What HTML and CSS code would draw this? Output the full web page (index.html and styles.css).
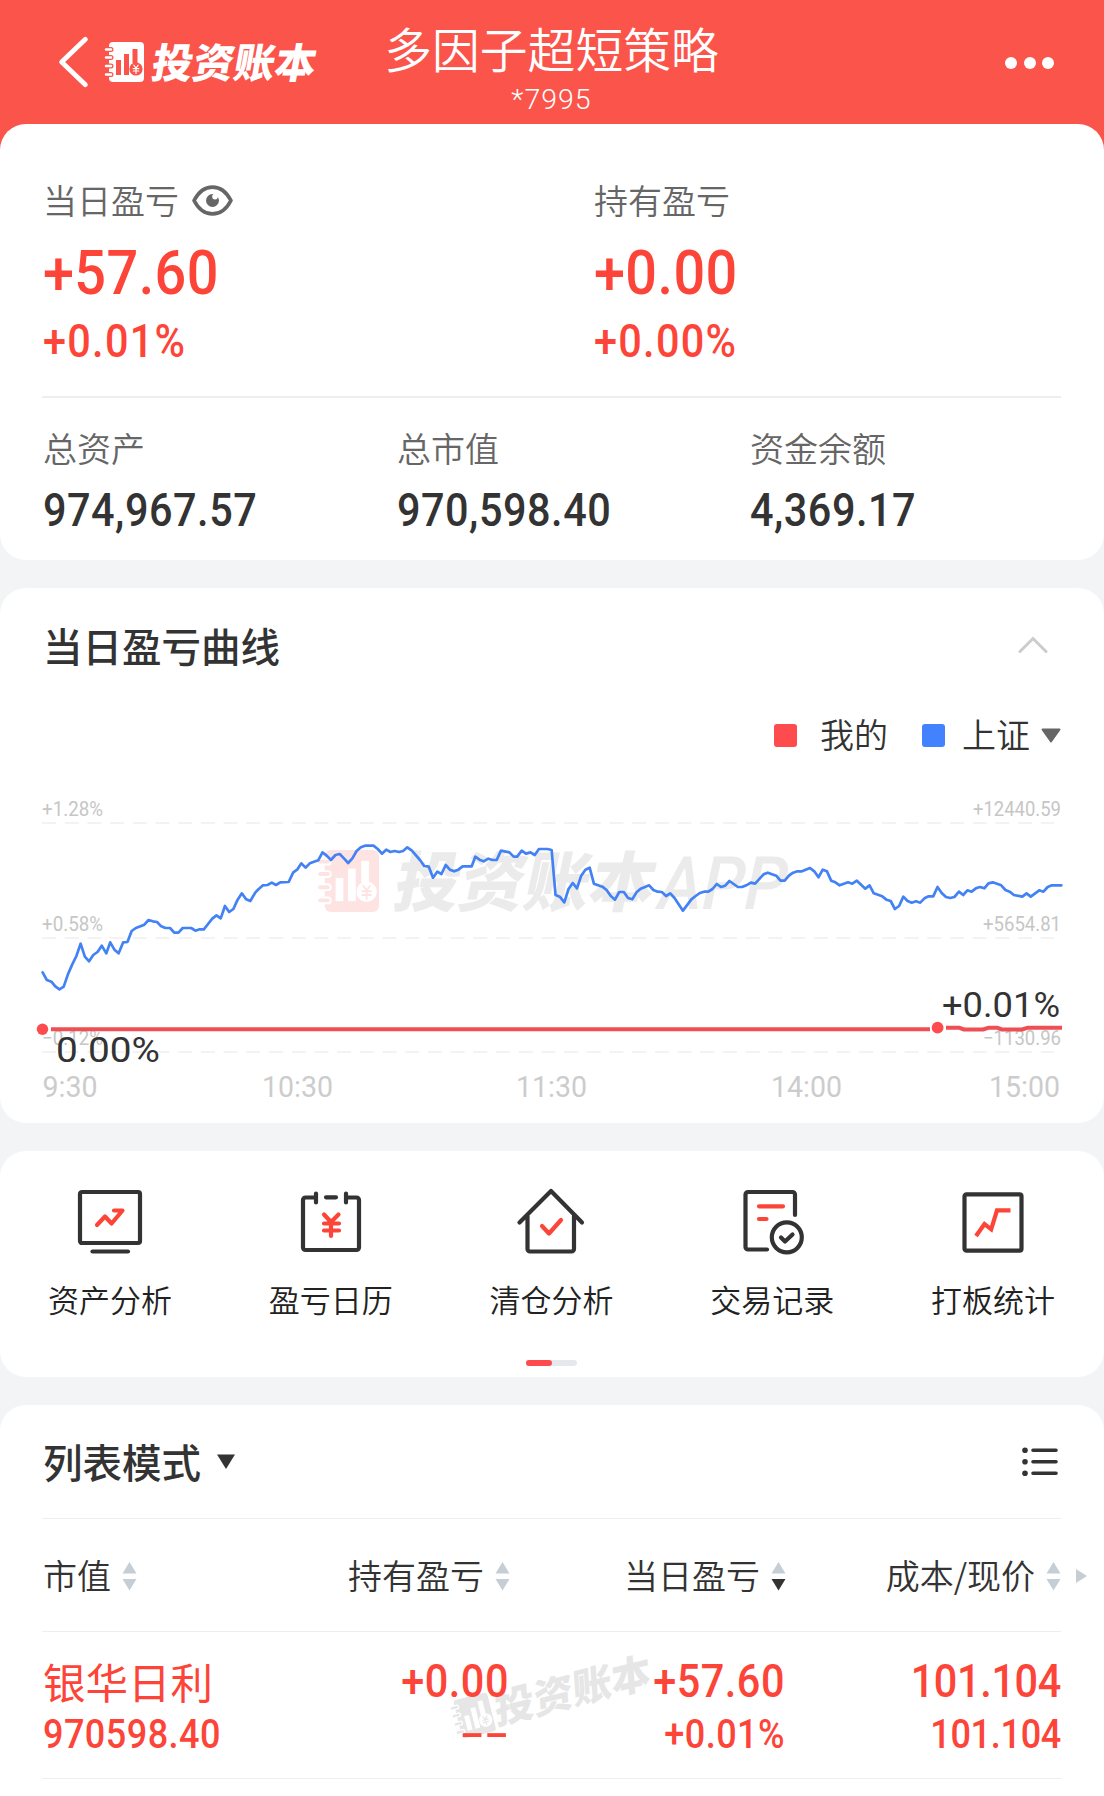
FILE: index.html
```html
<!DOCTYPE html>
<html lang="zh-CN">
<head>
    <meta charset="UTF-8">
    <meta name="viewport" content="width=device-width, initial-scale=1.0">
    <title>投资账本 - 多因子超短策略</title>
    <link rel="stylesheet" href="styles.css">
</head>
<body>
    <!-- shared shapes -->
    <svg class="sprite" width="0" height="0">
        <symbol id="logo" viewBox="0 0 40 40">
            <rect class="logo-body" x="5" y="0" width="35" height="40" rx="4"/>
            <g class="logo-hole">
                <rect x="12" y="18" width="5" height="15"/>
                <rect x="20" y="12" width="5" height="21"/>
                <rect x="28.5" y="7" width="5" height="14"/>
                <circle cx="32" cy="27" r="6.6"/>
            </g>
            <path class="logo-ring" d="M2 7.5h5M2 15.5h5M2 24h5M2 32.5h5"/>
            <path class="logo-pin" d="M2 7.5h5M2 15.5h5M2 24h5M2 32.5h5"/>
            <path class="logo-yen" d="M29.8 23.2l2.2 2.8 2.2-2.8M32 26v5.4M29.2 26.6h5.6M29.2 29h5.6"/>
        </symbol>
        <symbol id="sort" viewBox="0 0 15 30">
            <path class="sort-up" d="M7.5 1L14.5 12.500H.5z"/>
            <path class="sort-down" d="M7.5 29.500L14.5 18H.5z"/>
        </symbol>
    </svg>

    <header class="header">
        <div class="brand">
            <svg class="back" viewBox="0 0 30 50"><path d="M26 4L4 25l22 21"/></svg>
            <svg class="logo"><use href="#logo"/></svg>
            <span class="brand-name">投资账本</span>
        </div>
        <div class="title">
            <h1>多因子超短策略</h1>
            <p>*7995</p>
        </div>
        <div class="more"><i></i><i></i><i></i></div>
    </header>

    <section class="card summary">
        <div class="profit">
            <div>
                <div class="label">当日盈亏
                    <svg class="eye" viewBox="0 0 40 32">
                        <path d="M2 16C11-1.500 29-1.500 38 16C29 33.500 11 33.500 2 16z"/>
                        <circle cx="20" cy="16" r="6.300"/>
                        <circle class="shine" cx="22.500" cy="12.200" r="2.800"/>
                    </svg>
                </div>
                <div class="num big">+57.60</div>
                <div class="num pct">+0.01%</div>
            </div>
            <div>
                <div class="label">持有盈亏</div>
                <div class="num big">+0.00</div>
                <div class="num pct">+0.00%</div>
            </div>
        </div>
        <div class="assets">
            <div>
                <div class="label">总资产</div>
                <div class="num">974,967.57</div>
            </div>
            <div>
                <div class="label">总市值</div>
                <div class="num">970,598.40</div>
            </div>
            <div>
                <div class="label">资金余额</div>
                <div class="num">4,369.17</div>
            </div>
        </div>
    </section>

    <section class="card curve">
        <div class="curve-head">
            <h2>当日盈亏曲线</h2>
            <svg class="collapse" viewBox="0 0 30 18"><path d="M2 15.500L15 2.500l13 13"/></svg>
        </div>
        <div class="legend">
            <i class="mine"></i><span>我的</span>
            <i class="index"></i><span>上证</span>
            <svg class="drop" viewBox="0 0 20 15"><path d="M1.500 1.500h17L10 13.500z"/></svg>
        </div>
        <svg class="chart" viewBox="0 767 1104 356">
            <!-- watermark -->
            <svg class="mark-logo" x="317" y="849" width="62" height="64" preserveAspectRatio="none"><use href="#logo"/></svg>
            <g class="mark-text" transform="translate(391 906) skewX(-12)">
                <text textLength="260" lengthAdjust="spacingAndGlyphs">投资账本</text>
                <text class="mark-app" x="264" y="3" textLength="128" lengthAdjust="spacingAndGlyphs">APP</text>
            </g>

            <path class="grid" d="M42 823H1054M42 938H1054M42 1052H1054"/>
            <g class="scale">
                <text x="42" y="816" textLength="61" lengthAdjust="spacingAndGlyphs">+1.28%</text>
                <text x="42" y="930.500" textLength="61" lengthAdjust="spacingAndGlyphs">+0.58%</text>
                <text x="42" y="1045" textLength="61" lengthAdjust="spacingAndGlyphs">−0.12%</text>
                <text x="973" y="816" textLength="88" lengthAdjust="spacingAndGlyphs">+12440.59</text>
                <text x="983" y="930.500" textLength="78" lengthAdjust="spacingAndGlyphs">+5654.81</text>
                <text x="983" y="1045" textLength="78" lengthAdjust="spacingAndGlyphs">−1130.96</text>
            </g>

            <polyline class="line-index" transform="translate(0 840) scale(.35204 .33333)" points="
                121,397 133,420 146,425 157,439 169,448 181,440 193,403 205,374 217,348 229,311 241,350 253,364
                265,345 277,336 289,317 302,340 313,307 325,329 337,340 350,307 362,306 374,273 386,264 410,254
                422,240 434,244 446,246 458,259 470,264 483,264 495,278 507,278 519,264 543,264 555,272 567,268
                579,268 591,252 603,236 615,226 627,235 639,198 651,216 663,207 675,179 687,160 699,178 711,183
                725,158 735,147 747,136 760,135 772,128 784,135 796,127 820,126 833,97 844,89 856,70 868,83
                880,70 904,61 916,37 928,47 940,60 953,45 965,42 977,55 989,69 1001,55 1013,33 1025,22
                1037,17 1061,17 1073,27 1085,41 1097,29 1109,36 1121,33 1133,36 1145,33 1157,22 1170,32 1193,60
                1205,78 1218,80 1230,113 1242,95 1254,102 1266,75 1278,89 1290,94 1302,89 1314,79 1340,79 1350,50
                1362,59 1374,64 1387,56 1399,60 1411,60 1423,32 1447,37 1459,50 1469,50 1482,32 1494,41 1507,37
                1519,45 1531,27 1555,27 1567,30 1578,165 1590,170 1603,187 1615,147 1627,129 1639,145 1651,107
                1663,89 1675,83 1687,131 1711,140 1723,150 1735,168 1747,179 1759,156 1772,156 1784,174 1796,178
                1808,157 1820,146 1844,136 1856,150 1868,155 1880,156 1892,168 1904,160 1916,174 1940,212 1964,178
                1976,168 1988,159 2000,155 2012,155 2024,147 2036,132 2048,141 2060,137 2072,123 2096,141 2108,141
                2120,136 2133,128 2145,131 2169,103 2181,98 2205,107 2217,122 2229,122 2241,107 2253,98 2265,94
                2278,94 2301,84 2313,94 2325,112 2337,89 2349,94 2361,122 2373,127 2385,136 2409,127 2421,131
                2434,122 2458,146 2470,136 2482,160 2506,169 2518,179 2530,183 2542,207 2554,198 2566,170 2578,183
                2590,188 2602,184 2614,188 2626,175 2638,169 2651,169 2663,141 2675,159 2687,171 2699,174 2711,171
                2724,155 2736,165 2748,151 2760,155 2772,145 2784,141 2796,145 2808,130 2820,127 2844,136 2856,150
                2868,155 2880,165 2904,170 2916,160 2928,170 2952,151 2964,155 2976,141 2988,136 3015,136"/>

            <path class="line-mine" d="M51 1029.300H930M946 1027.700H959L964 1029.500H983L989 1027.700H997L1002 1029.500H1022L1028 1027.700H1062"/>
            <circle class="dot" cx="42.500" cy="1029.300" r="5.700"/>
            <circle class="dot" cx="937.600" cy="1027.700" r="5.900"/>
            <g class="tip">
                <text x="56" y="1061.500" textLength="104" lengthAdjust="spacingAndGlyphs">0.00%</text>
                <text x="942" y="1017" textLength="118" lengthAdjust="spacingAndGlyphs">+0.01%</text>
            </g>
            <g class="time">
                <text x="42.500" y="1097" textLength="55" lengthAdjust="spacingAndGlyphs">9:30</text>
                <text x="262" y="1097" textLength="71" lengthAdjust="spacingAndGlyphs">10:30</text>
                <text x="516" y="1097" textLength="71" lengthAdjust="spacingAndGlyphs">11:30</text>
                <text x="771" y="1097" textLength="71" lengthAdjust="spacingAndGlyphs">14:00</text>
                <text x="989" y="1097" textLength="71" lengthAdjust="spacingAndGlyphs">15:00</text>
            </g>
        </svg>
    </section>

    <section class="card tools">
        <ul class="tool-list">
            <li>
                <svg viewBox="0 0 72 72">
                    <rect x="6" y="6" width="60" height="51" rx="2"/>
                    <path d="M18.500 65.500h35.500"/>
                    <path class="red" d="M23 39l8-8.500 6.600 7L48.500 24.500H40"/>
                </svg>
                资产分析
            </li>
            <li>
                <svg viewBox="0 0 72 72">
                    <path d="M21 11.500H10.500a2.500 2.500 0 0 0-2.500 2.500V61.500a2.500 2.500 0 0 0 2.500 2.500H61.500a2.500 2.500 0 0 0 2.500-2.500V14a2.500 2.500 0 0 0-2.500-2.500H51M21 7.500v9M51 7.500v9M31 11.300h10"/>
                    <path class="red" d="M29 28.500l7 7.500 7.500-7.500M36 36v14M29 37.500h15M29 44.500h15"/>
                </svg>
                盈亏日历
            </li>
            <li>
                <svg viewBox="0 0 72 72">
                    <path d="M4.500 36.500L36 5l31 31.500M12.500 30v33a2.500 2.500 0 0 0 2.500 2.500h41.500a2.500 2.500 0 0 0 2.500-2.500V30"/>
                    <path class="red" d="M27 40l7 7.500L46 34"/>
                </svg>
                清仓分析
            </li>
            <li>
                <svg viewBox="0 0 72 72">
                    <path d="M59 29V8.500A2.500 2.500 0 0 0 56.500 6H12a2.500 2.500 0 0 0-2.500 2.500V61a2.500 2.500 0 0 0 2.500 2.500h19"/>
                    <circle cx="50.800" cy="51.300" r="15"/>
                    <path d="M45 51.500l4 4 7.500-7"/>
                    <path class="red" d="M23 20.300h24M23 33h7.500"/>
                </svg>
                交易记录
            </li>
            <li>
                <svg viewBox="0 0 72 72">
                    <rect x="7.500" y="8.300" width="57" height="56.400" rx="2"/>
                    <path class="red flat" d="M19 50l8.500-12 6.700 5.300L40 24.300h13.500"/>
                </svg>
                打板统计
            </li>
        </ul>
        <div class="pager"><i></i></div>
    </section>

    <section class="card holdings">
        <div class="list-head">
            <h2>列表模式</h2>
            <svg class="mode-drop" viewBox="0 0 18 15"><path d="M0 .5h18L9 15z"/></svg>
            <svg class="list-icon" viewBox="0 0 36 32">
                <circle cx="3" cy="4.300" r="2.800"/><circle cx="3" cy="15.700" r="2.800"/><circle cx="3" cy="27.200" r="2.800"/>
                <path d="M11 4.300h23M11 15.700h23M11 27.200h23"/>
            </svg>
        </div>
        <div class="row thead">
            <div>市值<svg class="sort"><use href="#sort"/></svg></div>
            <div>持有盈亏<svg class="sort"><use href="#sort"/></svg></div>
            <div>当日盈亏<svg class="sort active"><use href="#sort"/></svg></div>
            <div>成本/现价<svg class="sort"><use href="#sort"/></svg></div>
            <svg class="next" viewBox="0 0 11 14"><path d="M0 0l11 7-11 7z"/></svg>
        </div>
        <div class="row item">
            <div class="watermark">
                <svg class="logo"><use href="#logo"/></svg>
                <span class="brand-name">投资账本</span>
            </div>
            <div>
                <div class="name">银华日利</div>
                <div class="num sub">970598.40</div>
            </div>
            <div>
                <div class="num">+0.00</div>
                <div class="num sub dashes">--</div>
            </div>
            <div>
                <div class="num">+57.60</div>
                <div class="num sub">+0.01%</div>
            </div>
            <div class="price">
                <div class="num">101.104</div>
                <div class="num sub">101.104</div>
            </div>
        </div>
    </section>
</body>
</html>
```
FILE: styles.css
```css
* {
    box-sizing: border-box;
    margin: 0;
    padding: 0;
}
body {
    width: 1104px;
    height: 1796px;
    overflow: hidden;
    background: #f3f4f6;
    color: #333;
    font-family: "Noto Sans CJK SC", sans-serif;
    font-size: 34px;
    font-weight: 350;
}
svg {
    display: block;
    flex: none;
}
h2 {
    font-size: 39.500px;
    font-weight: 500;
    line-height: 50px;
}
.sprite {
    position: absolute;
}

/* header */
.header {
    display: grid;
    grid-template-columns: 1fr 340px 1fr;
    height: 160px;
    padding: 0 50px 0 57px;
    background: #fa544b;
    color: #fff;
}
.brand {
    display: flex;
    align-items: center;
    height: 124px;
}
.back {
    width: 33px;
    height: 54px;
    fill: none;
    stroke: #fff;
    stroke-width: 4.500;
    stroke-linecap: round;
    stroke-linejoin: round;
}
.logo {
    width: 40px;
    height: 40px;
    margin-left: 14px;
    --paper: #fff;
    --hole: #fa544b;
}
.logo-body {
    fill: var(--paper);
}
.logo-hole {
    fill: var(--hole);
}
.logo-ring,
.logo-pin,
.logo-yen {
    fill: none;
    stroke-linecap: round;
}
.logo-ring {
    stroke: var(--hole);
    stroke-width: 5;
}
.logo-pin {
    stroke: var(--paper);
    stroke-width: 2.500;
}
.logo-yen {
    stroke: var(--paper);
    stroke-width: 1.200;
}
.brand-name {
    margin: -5px 0 0 9px;
    font-size: 41px;
    font-weight: 900;
    line-height: 50px;
    white-space: nowrap;
    transform: skewX(-10deg);
}
.title {
    padding-top: 18px;
    margin-left: -8px;
    text-align: center;
}
.title h1 {
    font-size: 47.800px;
    font-weight: 350;
    line-height: 60px;
    white-space: nowrap;
}
.title p {
    margin-top: 4px;
    font-family: Roboto, sans-serif;
    font-size: 28.500px;
    font-weight: 300;
    line-height: 36px;
    letter-spacing: 1px;
}
.more {
    display: flex;
    align-items: center;
    justify-content: flex-end;
    gap: 6.300px;
    height: 125px;
}
.more i {
    width: 12px;
    height: 12px;
    border-radius: 50%;
    background: #fff;
}

/* cards */
.card {
    position: relative;
    margin-bottom: 28px;
    border-radius: 26px;
    background: #fff;
}
.label {
    display: flex;
    align-items: center;
    padding-left: 1px;
    color: #666;
    line-height: 40px;
}
.num {
    font-family: Roboto, sans-serif;
    font-size: 46px;
    font-weight: 500;
    line-height: 50px;
    letter-spacing: .013em;
    white-space: nowrap;
    transform: scaleX(.9);
    transform-origin: left;
}

/* summary */
.summary {
    height: 436px;
    margin-top: -36px;
    padding: 56px 43px 0 42px;
}
.profit {
    display: grid;
    grid-template-columns: 551px 1fr;
    height: 218px;
    border-bottom: 2px solid #eee;
    color: #fd4438;
}
.profit .num {
    padding-left: 1px;
}
.eye {
    width: 41px;
    height: 33px;
    margin: 1px 0 0 13px;
    fill: #666;
}
.eye path {
    fill: none;
    stroke: #666;
    stroke-width: 3.600;
    stroke-linejoin: round;
}
.eye .shine {
    fill: #fff;
}
.num.big {
    margin-top: 18px;
    font-size: 62px;
    line-height: 70px;
    letter-spacing: .008em;
}
.num.pct {
    margin-top: 8px;
    letter-spacing: .032em;
}
.assets {
    display: grid;
    grid-template-columns: 354px 353px 1fr;
    padding-top: 30px;
}
.assets .num {
    margin-top: 17px;
    padding-left: 1px;
}

/* chart */
.curve {
    height: 535px;
}
.curve-head {
    display: flex;
    align-items: center;
    justify-content: space-between;
    height: 115px;
    padding: 0 56px 2px 43px;
}
.collapse {
    width: 30px;
    height: 18px;
    fill: none;
    stroke: #ccc;
    stroke-width: 3;
    stroke-linecap: round;
}
.legend {
    display: flex;
    align-items: center;
    justify-content: flex-end;
    height: 64px;
    padding-right: 43px;
}
.legend i {
    width: 23px;
    height: 23px;
    border-radius: 3px;
}
.legend span {
    margin: -2px 34px 0 23px;
    line-height: 50px;
}
.legend .mine {
    background: #fd4b4e;
}
.legend .index {
    background: #4382fe;
}
.legend .index + span {
    margin: -2px 11px 0 17px;
}
.drop {
    width: 20px;
    height: 15px;
    fill: #666;
    stroke: #666;
    stroke-width: 2;
    stroke-linejoin: round;
}
.chart {
    width: 1104px;
    height: 356px;
    font-family: Roboto, sans-serif;
    font-weight: 400;
}
.mark-logo {
    --paper: #fee3e3;
    --hole: #fff;
}
.mark-text {
    fill: #ebebeb;
    font-family: "Noto Sans CJK SC", sans-serif;
    font-size: 65px;
    font-weight: 900;
}
.mark-app {
    font-family: Roboto, sans-serif;
    font-size: 74px;
    font-weight: 500;
}
.grid {
    stroke: #f3f3f3;
    stroke-width: 2;
    stroke-dasharray: 14 8.700;
}
.scale {
    fill: #c6c6c6;
    font-size: 20.500px;
}
.line-index,
.line-mine {
    fill: none;
    stroke-linejoin: round;
    stroke-linecap: round;
}
.line-index {
    stroke: #4382f5;
    stroke-width: 2.700;
    vector-effect: non-scaling-stroke;
}
.line-mine {
    stroke: #ef4f53;
    stroke-width: 4;
    stroke-linecap: butt;
}
.dot {
    fill: #fd4b4e;
}
.tip {
    fill: #333;
    font-size: 34.500px;
}
.time {
    fill: #ccc;
    font-size: 29.500px;
}

/* tools */
.tools {
    height: 226px;
    padding-top: 35px;
}
.tool-list {
    display: grid;
    grid-template-columns: repeat(5, 1fr);
    list-style: none;
}
.tool-list li {
    display: flex;
    flex-direction: column;
    align-items: center;
    gap: 21px;
    margin-left: -1px;
    color: #222;
    font-size: 31px;
    line-height: 40px;
}
.tool-list svg {
    width: 72px;
    height: 72px;
    fill: none;
    stroke: #333;
    stroke-width: 4.200;
    stroke-linecap: round;
    stroke-linejoin: round;
}
.tool-list .red {
    stroke: #fd4438;
}
.tool-list .flat {
    stroke-linecap: butt;
    stroke-linejoin: miter;
}
.pager {
    width: 51px;
    height: 6px;
    margin: 41px auto 0 526px;
    border-radius: 3px;
    background: #e6e8ee;
}
.pager i {
    display: block;
    width: 26px;
    height: 6px;
    border-radius: 3px;
    background: #fd4b4e;
}

/* holdings */
.holdings {
    height: 420px;
    padding: 0 43px 0 42px;
}
.list-head {
    display: flex;
    align-items: center;
    height: 114px;
    border-bottom: 1px solid #eee;
}
.list-head h2 {
    margin-top: -1px;
    padding-left: 1px;
}
.mode-drop {
    width: 18px;
    height: 15px;
    margin-left: 16px;
    fill: #333;
}
.list-icon {
    width: 36px;
    height: 32px;
    margin-left: auto;
    margin-right: 3px;
    fill: #333;
    stroke: none;
}
.list-icon path {
    stroke: #333;
    stroke-width: 3.600;
    stroke-linecap: round;
}
.row {
    position: relative;
    display: grid;
    grid-template-columns: 192px 276px 276px 275px;
    border-bottom: 1px solid #eee;
}
.thead {
    height: 113px;
    align-items: center;
}
.thead div {
    display: flex;
    align-items: center;
    justify-content: flex-end;
    line-height: 50px;
    padding-bottom: 1px;
    white-space: nowrap;
}
.thead div:first-child {
    justify-content: flex-start;
    padding-left: 1px;
}
.sort {
    width: 15px;
    height: 30px;
    margin: 2px 0 0 11px;
    fill: #c5cdd5;
}
.sort.active {
    --down: #333;
}
.sort-down {
    fill: var(--down, #c5cdd5);
}
.next {
    position: absolute;
    right: -26px;
    top: 50px;
    width: 11px;
    height: 14px;
    fill: #c5cdd5;
}
.item {
    height: 147px;
    padding-top: 24px;
    color: #fd4438;
    text-align: right;
}
.item > div:nth-child(2) {
    padding-left: 1px;
    text-align: left;
}
.item .num {
    transform-origin: right;
    margin-right: 1px;
}
.item .price .num {
    margin-right: 0;
    letter-spacing: -.008em;
}
.item > div:nth-child(2) .num {
    transform-origin: left;
}
.item .name {
    margin-bottom: 1px;
    font-size: 42.500px;
    font-weight: 400;
    line-height: 50px;
}
.item .sub {
    margin-top: 4px;
    font-size: 40px;
    line-height: 50px;
}
.item .dashes {
    letter-spacing: 0;
    transform: scaleX(1.800);
}
.watermark {
    position: absolute;
    left: 394px;
    top: 43px;
    display: flex;
    align-items: center;
    color: #e6e6e6;
    transform: rotate(-14deg);
}
.watermark .logo {
    --paper: #e6e6e6;
    --hole: #fff;
}
.watermark .brand-name {
    margin-left: 4px;
    font-size: 40px;
}
.item > div:not(.watermark) {
    position: relative;
}
```
